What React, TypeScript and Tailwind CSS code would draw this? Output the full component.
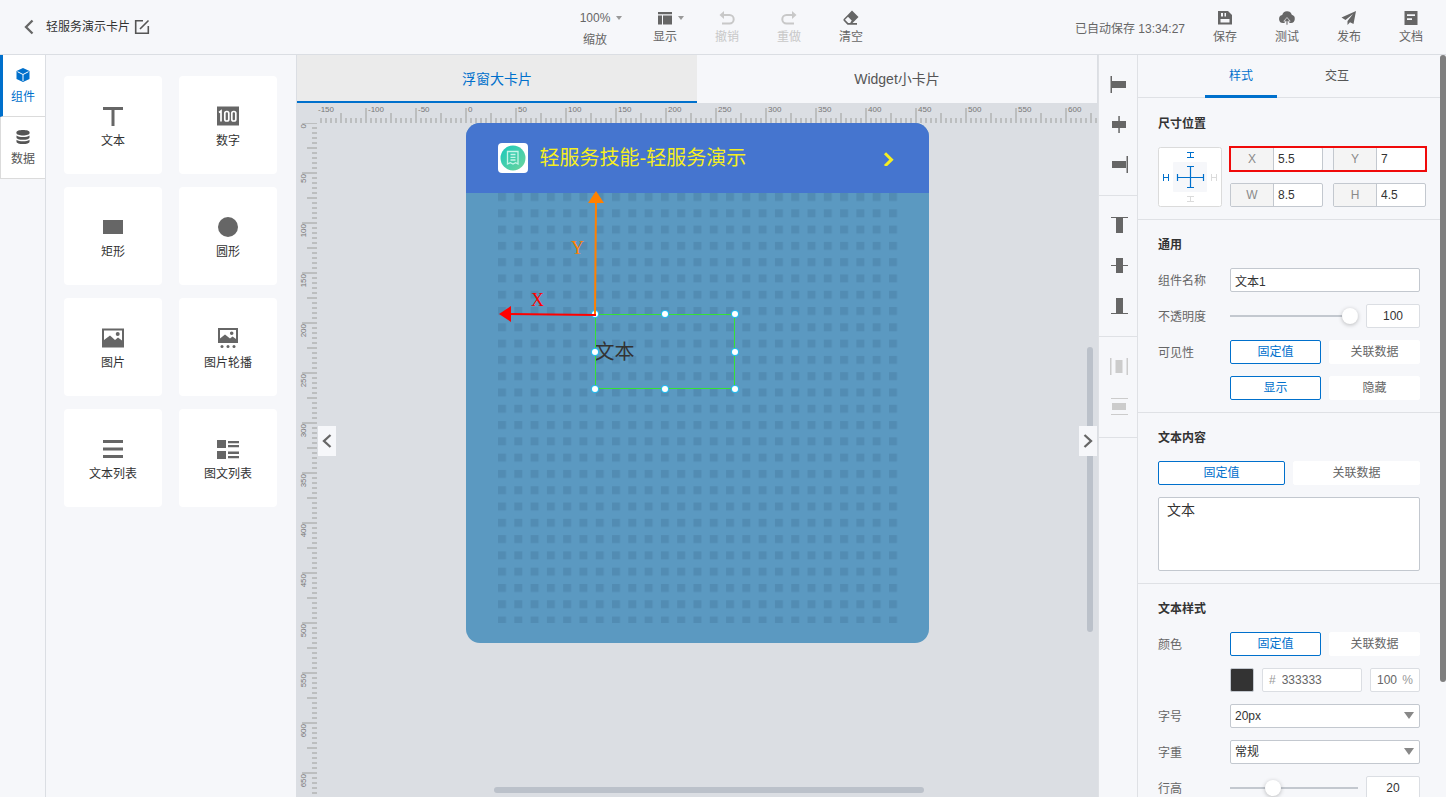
import { useState } from "react";
import type { ReactNode } from "react";
import clsx from "clsx";

const HEADER_ACTIONS = [
  {
    label: "保存",
    icon: (
      <path
        fillRule="evenodd"
        d="M3 3h10l4 4v9.500H3zM6 5v3.500h2V5zM9.500 5v3.500h1.500V5zM5.500 11v3.500h9V11z"
      />
    ),
  },
  {
    label: "测试",
    icon: (
      <>
        <path d="M6 15a4 4 0 0 1-.8-7.900A5 5 0 0 1 14.800 6.800 4.200 4.200 0 0 1 14 15h-1.200L10 12l-2.800 3z" />
        <path d="M10 9.500l3.200 3.700h-2.300V17H9.100v-3.800H6.800z" stroke="#f6f7fa" strokeWidth=".7" />
      </>
    ),
  },
  { label: "发布", icon: <path d="M17 3 2.500 9.500 6.500 12 14 6 8.500 13v4l2.500-2.700L14.500 16z" /> },
  {
    label: "文档",
    icon: <path fillRule="evenodd" d="M3.500 3h13v14h-13zM6 6.300v1.700h8V6.300zM6 10.300v1.700h5v-1.700z" />,
  },
];

const COMPONENTS = [
  { label: "文本", icon: <path d="M2 3h20v3h-8.500v16h-3V6H2z" /> },
  {
    label: "数字",
    icon: (
      <>
        <path d="M1 2.500h22v19H1z" />
        <path d="M3 8.500 5 7v10.500" fill="none" stroke="#fff" strokeWidth="1.700" />
        <rect x="8.800" y="7.500" width="4" height="9.500" rx="1.800" fill="none" stroke="#fff" strokeWidth="1.700" />
        <rect x="15.800" y="7.500" width="4" height="9.500" rx="1.800" fill="none" stroke="#fff" strokeWidth="1.700" />
      </>
    ),
  },
  { label: "矩形", icon: <path d="M2 5h20v14H2z" /> },
  { label: "圆形", icon: <circle cx="12" cy="12" r="10" /> },
  {
    label: "图片",
    icon: (
      <path
        fillRule="evenodd"
        d="M1 2.500h22v19H1zM3 4.500v9.500l6-4.500 5 4.500 3-2.500 4 3V4.500zM16.700 6a2 2 0 1 1 0 4 2 2 0 0 1 0-4z"
      />
    ),
  },
  {
    label: "图片轮播",
    icon: (
      <>
        <path
          fillRule="evenodd"
          d="M2 2h20v15H2zM4 4v8.500l5-4 5 4 2.500-2 3.500 2.500V4zM15.700 5.500a1.800 1.800 0 1 1 0 3.600 1.800 1.800 0 0 1 0-3.600z"
        />
        <circle cx="6" cy="20.500" r="1.500" />
        <circle cx="12" cy="20.500" r="1.500" />
        <circle cx="18" cy="20.500" r="1.500" />
      </>
    ),
  },
  { label: "文本列表", icon: <path d="M2 3h20v3H2zM2 10.500h20v3H2zM2 18h20v3H2z" /> },
  {
    label: "图文列表",
    icon: (
      <path d="M1 3h9v8H1zM1 14h9v8H1zM12 4h11v2.200H12zM12 8h11v2.200H12zM12 14.500h11v2.500H12zM12 19h11v2.200H12z" />
    ),
  },
];

// 对齐工具，按分组显示
const ALIGN_GROUPS = [
  {
    disabled: false,
    tools: [
      { label: "左对齐", d: "M1.500 2H3v17H1.500zM3 7h14v7H3z" },
      { label: "水平居中", d: "M9.300 2h1.500v17H9.300zM3 7h14v7H3z" },
      { label: "右对齐", d: "M17.500 2H19v17h-1.500zM3 7h14v7H3z" },
    ],
  },
  {
    disabled: false,
    tools: [
      { label: "顶对齐", d: "M2 2h17v1H2zM7 3h7v15H7z" },
      { label: "垂直居中", d: "M2 10h17v1H2zM7 3h7v15H7z" },
      { label: "底对齐", d: "M2 18h17v1H2zM7 3h7v15H7z" },
    ],
  },
  {
    disabled: true,
    tools: [
      { label: "水平分布", d: "M1 2h1.500v17H1zM17.500 2H19v17h-1.500zM6.500 4h7v13h-7z" },
      { label: "垂直分布", d: "M2 2h17v1H2zM2 18h17v1H2zM3 7h14v7H3z" },
    ],
  },
];

const tickSize = (value: number) => {
  if (value % 50 === 0) return 15;
  return value % 25 === 0 ? 10 : 5;
};

const range = (from: number, to: number) => {
  const list: number[] = [];
  for (let v = from; v <= to; v += 5) list.push(v);
  return list;
};

function HorizontalRuler() {
  return (
    <svg className="block h-5 w-full overflow-hidden" fill="#bcbebf" aria-hidden="true">
      <svg x="50%" overflow="visible">
        {range(-150, 630).map((v) => (
          <g key={v} transform={`translate(${v - 242} 0)`}>
            <rect y={20 - tickSize(v)} width="2" height={tickSize(v)} />
            {v % 50 === 0 && (
              <text x="3" y="9" fontSize="8" fill="#777">
                {v}
              </text>
            )}
          </g>
        ))}
      </svg>
    </svg>
  );
}

function VerticalRuler() {
  return (
    <svg className="block h-full w-5 overflow-hidden" fill="#bcbebf" aria-hidden="true">
      {range(0, 670).map((v) => (
        <g key={v} transform={`translate(0 ${v - 1})`}>
          <rect x={20 - tickSize(v)} width={tickSize(v)} height="2" />
          {v % 50 === 0 && (
            <text transform="translate(9 2) rotate(-90)" textAnchor="end" fontSize="8" fill="#777">
              {v}
            </text>
          )}
        </g>
      ))}
    </svg>
  );
}

function Caret() {
  return <span className="border-x-[3px] border-t-4 border-x-transparent border-t-[#999]" />;
}

function ToolButton({
  label,
  children,
  disabled,
  caret,
}: {
  label: string;
  children: ReactNode;
  disabled?: boolean;
  caret?: boolean;
}) {
  return (
    <button
      disabled={disabled}
      className={clsx("relative flex w-[62px] flex-col items-center", disabled ? "text-[#c8c8c8]" : "text-[#666]")}
    >
      <svg viewBox="0 0 20 20" className="h-5 w-5" fill="currentColor">
        {children}
      </svg>
      <span className="mt-px text-xs leading-4">{label}</span>
      {caret && (
        <span className="absolute top-2 right-3 flex">
          <Caret />
        </span>
      )}
    </button>
  );
}

function Header() {
  return (
    <header className="grid h-[55px] shrink-0 grid-cols-[1fr_auto_1fr] border-b border-[#dbdee3] bg-[#f6f7fa]">
      <div className="flex items-center pl-6">
        <button aria-label="返回">
          <svg viewBox="0 0 10 16" className="h-4 w-[10px]" fill="none" stroke="#666" strokeWidth="2.300">
            <path d="M8.500 1.500 2 8l6.500 6.500" />
          </svg>
        </button>
        <h1 className="ml-3 text-xs text-[#333]">轻服务演示卡片</h1>
        <button aria-label="重命名" className="ml-1">
          <svg viewBox="0 0 16 16" className="h-4 w-4" fill="none" stroke="#555" strokeWidth="1.600">
            <path d="M9 1.700H1.700v12.600h12.600V7M6 10 14.500 1.500" />
          </svg>
        </button>
      </div>

      <div className="flex items-start pt-2">
        <button className="relative mr-2 flex w-[62px] flex-col items-center text-xs text-[#666]">
          <span className="leading-5">100%</span>
          <span className="mt-1 leading-4">缩放</span>
          <span className="absolute top-2 right-1 flex">
            <Caret />
          </span>
        </button>
        <ToolButton label="显示" caret>
          <path d="M3 4h14v2.300H3zM3 7.500h4v9H3zM8 7.500h9v9H8z" />
        </ToolButton>
        <ToolButton label="撤销" disabled>
          <path d="M4 7h8.500a4.200 4.200 0 0 1 0 8.400H5" fill="none" stroke="currentColor" strokeWidth="2" />
          <path d="M7 3v8L2.500 7z" />
        </ToolButton>
        <ToolButton label="重做" disabled>
          <path d="M16 7H7.500a4.200 4.200 0 0 0 0 8.400H15" fill="none" stroke="currentColor" strokeWidth="2" />
          <path d="M13 3v8l4.500-4z" />
        </ToolButton>
        <ToolButton label="清空">
          <path
            fillRule="evenodd"
            d="M11 2.500 17.500 9l-6 6H16v1.800H6.500L2.500 12.500v-1.200zM7 8.800l-3 3 3.200 3.200h2l1.500-2.500z"
          />
        </ToolButton>
      </div>

      <div className="flex items-start justify-end pt-2 pr-1">
        <span className="mr-[9px] pt-[11px] text-xs leading-5 whitespace-nowrap text-[#666]">已自动保存 13:34:27</span>
        {HEADER_ACTIONS.map((action) => (
          <ToolButton key={action.label} label={action.label}>
            {action.icon}
          </ToolButton>
        ))}
      </div>
    </header>
  );
}

function SideRail() {
  return (
    <nav className="w-[46px] shrink-0 border-r border-[#dbdee3]">
      <button className="flex h-[62px] w-full flex-col items-center border-b border-l-[3px] border-b-[#dbdbdb] border-l-[#0070cc] bg-white pt-3 pr-[2px] text-[#0070cc]">
        <svg viewBox="0 0 16 16" className="h-4 w-4" fill="currentColor">
          <path d="M8 1l6.500 3v8L8 15l-6.500-3V4z" />
          <path d="M2.500 4.700 8 7.500l5.500-2.800M8 7.500V14" fill="none" stroke="#fff" strokeWidth="1" />
        </svg>
        <span className="mt-[6px] text-xs leading-4">组件</span>
      </button>
      <button className="flex h-[62px] w-full flex-col items-center border-b border-l border-[#dbdbdb] bg-white pt-3 text-[#555]">
        <svg viewBox="0 0 16 16" className="h-4 w-4" fill="currentColor">
          <path d="M1.500 3.300C1.500 1.900 4.300 1 8 1s6.500.9 6.500 2.300v1C14.500 5.600 11.700 6.500 8 6.500S1.500 5.600 1.500 4.300z" />
          <path d="M1.500 6.500C3 7.600 5.300 8 8 8s5-.4 6.500-1.500v2c0 1.400-2.800 2.300-6.500 2.300S1.500 9.900 1.500 8.500z" />
          <path d="M1.500 10.800c1.500 1.100 3.800 1.500 6.500 1.500s5-.4 6.500-1.500v1.900c0 1.400-2.800 2.300-6.500 2.300s-6.500-.9-6.500-2.300z" />
        </svg>
        <span className="mt-[6px] text-xs leading-4">数据</span>
      </button>
    </nav>
  );
}

function ComponentPanel() {
  return (
    <aside className="w-[251px] shrink-0 border-r border-[#dbdee3] pt-[21px] pl-[18px]">
      <div className="grid grid-cols-[98px_98px] gap-x-[17px] gap-y-[13px]">
        {COMPONENTS.map((item) => (
          <button key={item.label} className="flex h-[98px] flex-col items-center rounded bg-white pt-7">
            <svg viewBox="0 0 24 24" className="h-6 w-6" fill="#666">
              {item.icon}
            </svg>
            <span className="mt-[5px] text-xs leading-4 text-[#333]">{item.label}</span>
          </button>
        ))}
      </div>
    </aside>
  );
}

const HANDLES = [
  "top-0 left-0",
  "top-0 left-1/2",
  "top-0 left-full",
  "top-1/2 left-0",
  "top-1/2 left-full",
  "top-full left-0",
  "top-full left-1/2",
  "top-full left-full",
];

function CardPreview() {
  return (
    <div className="relative h-[520px] w-[463px] shrink-0 overflow-hidden rounded-[14px] bg-[#5b99c1]">
      <div className="flex h-[70px] items-center bg-[#4575cf] pr-[34px] pl-8 text-[#f5ee22]">
        <svg viewBox="0 0 30 30" className="h-[30px] w-[30px]">
          <defs>
            <linearGradient id="logo" x1="0" y1="0" x2="1" y2="1">
              <stop offset="0" stopColor="#18c9bd" />
              <stop offset="1" stopColor="#6fd49b" />
            </linearGradient>
          </defs>
          <rect width="30" height="30" rx="4" fill="#fff" />
          <circle cx="15" cy="15" r="12.500" fill="url(#logo)" />
          <path
            d="M10.500 8.500h9.500v12.500l-2.300-1.300-2.700 1.300-2.700-1.300L9.500 21V8.500zM12.500 11.500h5M12.500 14.300h5M12.500 17h5"
            fill="none"
            stroke="#c5f5e8"
            strokeWidth="1.300"
          />
        </svg>
        <h2 className="ml-3 flex-1 text-xl">轻服务技能-轻服务演示</h2>
        <svg viewBox="0 0 12 16" className="h-4 w-3" fill="none" stroke="currentColor" strokeWidth="3">
          <path d="M2 3.300 8.500 9.700 2 16" />
        </svg>
      </div>

      <svg className="ml-8 block h-[430px] w-[400px]" aria-hidden="true">
        <defs>
          <pattern id="grid" width="16.290" height="16.290" patternUnits="userSpaceOnUse">
            <rect width="8" height="8" fill="#528cb3" />
          </pattern>
        </defs>
        <rect width="400" height="430" fill="url(#grid)" />
      </svg>

      {/* 选中的文本组件 */}
      <div className="absolute top-[191px] left-[129px] flex h-[75px] w-[140px] items-center outline -outline-offset-1 outline-[#35e235]">
        <span className="text-xl text-[#333]">文本</span>
        {HANDLES.map((pos) => (
          <i
            key={pos}
            className={clsx(
              "absolute h-[6px] w-[6px] -translate-x-1/2 -translate-y-1/2 rounded-full bg-white ring-1 ring-[#25bdf0]",
              pos,
            )}
          />
        ))}
      </div>

      {/* 坐标方向箭头 */}
      <svg className="absolute top-[60px] left-8 h-36 w-28" fontFamily="Liberation Serif, serif" fontSize="18">
        <path d="M98 17 97 131" stroke="#ff8000" strokeWidth="2" />
        <path d="M98 8 106 20H90z" fill="#ff8000" />
        <path d="M98 132 11 131" stroke="#f00" strokeWidth="2" />
        <path d="M1 131l12-8v16z" fill="#f00" />
        <text x="33" y="123" fill="#f00">
          X
        </text>
        <text x="73" y="71" fill="#ff8000">
          Y
        </text>
      </svg>
    </div>
  );
}

function Workspace() {
  const [tab, setTab] = useState("large");
  const tabs = [
    { id: "large", label: "浮窗大卡片" },
    { id: "widget", label: "Widget小卡片" },
  ];

  return (
    <main className="relative flex min-w-0 flex-1 flex-col bg-[#dbdee3] pr-px">
      <div className="grid grid-cols-2 bg-[#f6f7fa]">
        {tabs.map((item) => (
          <button
            key={item.id}
            onClick={() => setTab(item.id)}
            className={clsx(
              "h-12 border-b-2 pt-[2px] text-sm",
              tab === item.id
                ? "border-[#0070cc] bg-[#ebebeb] text-[#0070cc]"
                : "border-transparent bg-[#f6f7fa] text-[#555]",
            )}
          >
            {item.label}
          </button>
        ))}
      </div>

      <div className="grid min-h-0 flex-1 grid-cols-[20px_minmax(0,1fr)] grid-rows-[20px_minmax(0,1fr)] overflow-hidden">
        <div />
        <HorizontalRuler />
        <VerticalRuler />
        <div className="flex items-start justify-center overflow-hidden pr-5">
          <CardPreview />
        </div>
      </div>

      <div className="absolute right-[5px] bottom-[165px] h-[285px] w-[6px] rounded-full bg-[#bbc1ca]" />
      <div className="absolute bottom-1 left-[197px] h-[6px] w-[430px] rounded-full bg-[#bbc1ca]" />

      <button
        aria-label="收起组件"
        className="absolute top-1/2 left-[21px] flex h-[30px] w-[18px] items-center justify-center bg-[#f6f7fa]"
      >
        <svg viewBox="0 0 10 16" className="h-4 w-[10px]" fill="none" stroke="#666" strokeWidth="2.300">
          <path d="M8.500 2 2 8l6.500 6" />
        </svg>
      </button>
      <button
        aria-label="收起属性"
        className="absolute top-1/2 right-px flex h-[30px] w-[18px] items-center justify-center bg-[#f6f7fa]"
      >
        <svg viewBox="0 0 10 16" className="h-4 w-[10px]" fill="none" stroke="#666" strokeWidth="2.300">
          <path d="M1.500 2 8 8l-6.500 6" />
        </svg>
      </button>
    </main>
  );
}

function AlignBar() {
  return (
    <div className="w-[39px] shrink-0 border-l border-[#dfe1e5]">
      {ALIGN_GROUPS.map((group, index) => (
        <div
          key={index}
          className="flex flex-col items-center gap-5 border-b border-[#dfe1e5] pt-[19px] pb-[21px] pl-[2px]"
        >
          {group.tools.map((tool) => (
            <button key={tool.label} aria-label={tool.label} disabled={group.disabled}>
              <svg viewBox="0 0 20 20" className="block h-5 w-5" fill={group.disabled ? "#ccc" : "#666"}>
                <path d={tool.d} />
              </svg>
            </button>
          ))}
        </div>
      ))}
    </div>
  );
}

function Section({ title, children }: { title: string; children: ReactNode }) {
  return (
    <section className="border-b border-[#dfe1e5] px-5 pt-[17px] pb-3">
      <h3 className="mb-[15px] text-xs leading-4 font-bold text-[#333]">{title}</h3>
      <div className="flex flex-col gap-3">{children}</div>
    </section>
  );
}

function Row({ label, htmlFor, children }: { label?: string; htmlFor?: string; children: ReactNode }) {
  return (
    <div className="flex h-6 items-center text-xs">
      <label htmlFor={htmlFor} className="w-[72px] shrink-0 pt-[2px] text-[#666]">
        {label}
      </label>
      <div className="flex min-w-0 flex-1 gap-2">{children}</div>
    </div>
  );
}

function Toggle({ options }: { options: string[] }) {
  const [active, setActive] = useState(options[0]);

  return (
    <div className="flex flex-1 gap-2 text-xs">
      {options.map((option) => (
        <button
          key={option}
          onClick={() => setActive(option)}
          className={clsx(
            "h-6 flex-1 rounded-xs border bg-white",
            active === option ? "border-[#0070cc] text-[#0070cc]" : "border-white text-[#666]",
          )}
        >
          {option}
        </button>
      ))}
    </div>
  );
}

function NumberField({ name, value }: { name: string; value: string }) {
  return (
    <label className="flex h-6 w-[93px] overflow-hidden rounded-xs border border-[#c3c8cf] bg-white text-xs leading-[22px]">
      <span className="w-[43px] shrink-0 border-r border-[#c3c8cf] bg-[#f4f4f4] text-center text-[#8a8a8a]">{name}</span>
      <input defaultValue={value} className="w-full min-w-0 pl-1 text-[#333] outline-none" />
    </label>
  );
}

function SliderRow({ id, label, value, max }: { id: string; label: string; value: number; max: number }) {
  const [current, setCurrent] = useState(value);

  return (
    <Row label={label} htmlFor={id}>
      <input
        id={id}
        type="range"
        max={max}
        value={current}
        onChange={(e) => setCurrent(Number(e.target.value))}
        className="h-6 min-w-0 flex-1 appearance-none bg-transparent [&::-webkit-slider-runnable-track]:h-[2px] [&::-webkit-slider-runnable-track]:bg-[#c3c8cf] [&::-webkit-slider-thumb]:-mt-[7px] [&::-webkit-slider-thumb]:h-4 [&::-webkit-slider-thumb]:w-4 [&::-webkit-slider-thumb]:appearance-none [&::-webkit-slider-thumb]:rounded-full [&::-webkit-slider-thumb]:bg-white [&::-webkit-slider-thumb]:shadow-[0_1px_4px_rgba(0,0,0,0.25)]"
      />
      <input
        aria-label={label}
        value={current}
        onChange={(e) => setCurrent(Number(e.target.value) || 0)}
        className="h-6 w-[54px] rounded-xs border border-[#dbdee3] bg-white text-center text-[#333] outline-none"
      />
    </Row>
  );
}

function SelectRow({ id, label, options }: { id: string; label: string; options: string[] }) {
  return (
    <Row label={label} htmlFor={id}>
      <div className="relative flex-1">
        <select
          id={id}
          className="block h-6 w-full appearance-none rounded-xs border border-[#c3c8cf] bg-white pl-1 text-[#333] outline-none"
        >
          {options.map((option) => (
            <option key={option}>{option}</option>
          ))}
        </select>
        <span className="pointer-events-none absolute top-2 right-[6px] border-x-[5px] border-t-[7px] border-x-transparent border-t-[#888]" />
      </div>
    </Row>
  );
}

function AnchorBox() {
  return (
    <svg viewBox="0 0 64 60" className="h-[60px] w-16 shrink-0" fill="none" stroke="#0070cc">
      <rect x=".5" y=".5" width="63" height="59" rx="2" fill="#fff" stroke="#dbdbdb" />
      <rect x="15" y="15" width="34" height="30" rx="1" fill="#f6f7fa" stroke="none" />
      <path d="M32.500 19.500v21M29 19.500h7M29 40.500h7M19.500 30.500h26M19.500 27v7M45.500 27v7" strokeWidth="1.200" />
      <path d="M29 5.500h7M29 10.500h7M32.500 5.500v5M5.500 27v7M10.500 27v7M5.500 30.500h5" />
      <path d="M29 49.500h7M29 54.500h7M32.500 49.500v5M53.500 27v7M58.500 27v7M53.500 30.500h5" stroke="#dbdbdb" />
    </svg>
  );
}

function PropertyPanel() {
  const [tab, setTab] = useState("样式");

  return (
    <aside className="relative w-[309px] shrink-0 overflow-hidden border-l border-[#dfe1e5] pr-[6px]">
      <div className="mb-px flex h-[43px] justify-center gap-6 border-b border-[#dfe1e5]">
        {["样式", "交互"].map((item) => (
          <button
            key={item}
            onClick={() => setTab(item)}
            className={clsx(
              "h-[43px] w-[72px] border-b-[3px] pt-[2px] text-xs",
              tab === item ? "border-[#0070cc] text-[#0070cc]" : "border-transparent text-[#555]",
            )}
          >
            {item}
          </button>
        ))}
      </div>

      <Section title="尺寸位置">
        <div className="flex gap-2">
          <AnchorBox />
          <div className="relative grid grid-cols-[93px_93px] gap-x-[10px] gap-y-3">
            <NumberField name="X" value="5.5" />
            <NumberField name="Y" value="7" />
            <NumberField name="W" value="8.5" />
            <NumberField name="H" value="4.5" />
            {/* 高亮坐标输入框 */}
            <div className="pointer-events-none absolute -top-px -left-px h-[26px] w-[198px] border-2 border-[#f00a0a]" />
          </div>
        </div>
      </Section>

      <Section title="通用">
        <Row label="组件名称" htmlFor="name">
          <input
            id="name"
            defaultValue="文本1"
            className="h-6 min-w-0 flex-1 rounded-xs border border-[#c3c8cf] bg-white pl-1 text-[#333] outline-none"
          />
        </Row>
        <SliderRow id="opacity" label="不透明度" value={100} max={100} />
        <Row label="可见性">
          <Toggle options={["固定值", "关联数据"]} />
        </Row>
        <Row>
          <Toggle options={["显示", "隐藏"]} />
        </Row>
      </Section>

      <Section title="文本内容">
        <Toggle options={["固定值", "关联数据"]} />
        <textarea
          aria-label="文本内容"
          defaultValue="文本"
          className="block h-[74px] w-full resize-none rounded-xs border border-[#c3c8cf] bg-white px-2 py-[2px] text-sm text-[#333] outline-none"
        />
      </Section>

      <Section title="文本样式">
        <Row label="颜色">
          <Toggle options={["固定值", "关联数据"]} />
        </Row>
        <Row>
          <button aria-label="选择颜色" className="h-6 w-6 rounded-xs border border-[#c3c8cf] bg-[#333]" />
          <label className="flex h-6 min-w-0 flex-1 items-center gap-[6px] rounded-xs border border-[#dbdee3] bg-white pl-[6px] text-[#999]">
            #
            <input defaultValue="333333" className="w-full min-w-0 text-[#666] outline-none" />
          </label>
          <label className="flex h-6 w-[50px] items-center justify-between rounded-xs border border-[#dbdee3] bg-white px-[6px] text-[#999]">
            <input defaultValue="100" className="w-[22px] min-w-0 text-[#666] outline-none" />%
          </label>
        </Row>
        <SelectRow id="font-size" label="字号" options={["20px", "24px", "28px"]} />
        <SelectRow id="font-weight" label="字重" options={["常规", "加粗"]} />
        <SliderRow id="line-height" label="行高" value={20} max={64} />
      </Section>

      <div className="absolute top-0 right-0 h-[627px] w-[6px] rounded-full bg-[#7f7f7f]" />
    </aside>
  );
}

export default function App() {
  return (
    <div className="flex h-screen flex-col overflow-hidden bg-[#f6f7fa] font-['Liberation_Sans','Noto_Sans_CJK_SC',sans-serif]">
      <Header />
      <div className="flex min-h-0 flex-1">
        <SideRail />
        <ComponentPanel />
        <Workspace />
        <AlignBar />
        <PropertyPanel />
      </div>
    </div>
  );
}
